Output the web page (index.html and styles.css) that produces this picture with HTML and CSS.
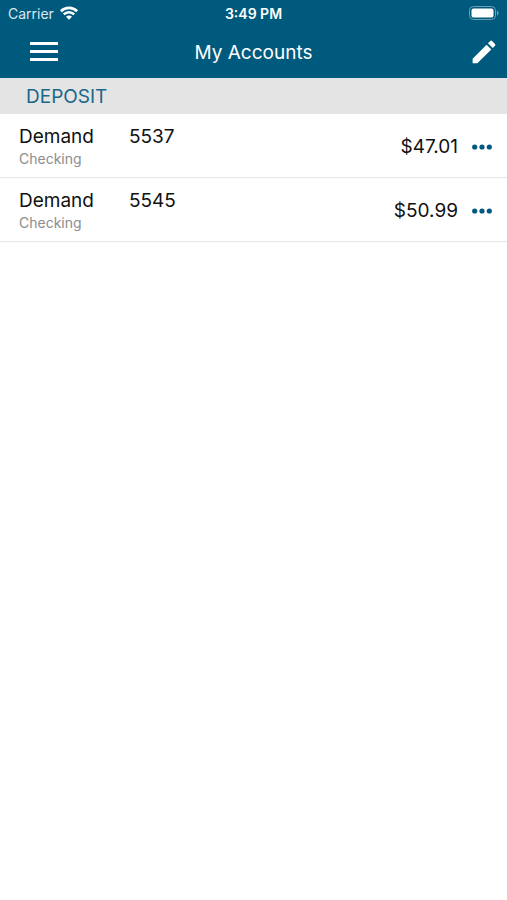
FILE: index.html
```html
<!DOCTYPE html>
<html lang="en">
<head>
    <meta charset="UTF-8">
    <meta name="viewport" content="width=device-width, initial-scale=1.0">
    <title>My Accounts</title>
    <link rel="stylesheet" href="styles.css">
</head>
<body>
    <header>
        <div class="status">
            <div class="carrier">
                <span>Carrier</span>
                <svg width="18" height="14" viewBox="0 0 18 14" fill="none" stroke="#fff" stroke-width="2.6">
                    <path d="M0.9 5.2a11.6 11.6 0 0 1 16.2 0"/>
                    <path d="M3.8 8.4a7.4 7.4 0 0 1 10.4 0"/>
                    <path d="M9 13.8L6 10.8a4.2 4.2 0 0 1 6 0z" fill="#fff" stroke="none"/>
                </svg>
            </div>
            <span class="time">3:49 PM</span>
            <svg class="battery" width="30" height="14" viewBox="0 0 30 14">
                <rect x="0.5" y="0.5" width="26" height="13" rx="4" fill="none" stroke="#6d9fb8"/>
                <rect x="2.5" y="2.5" width="22" height="9" rx="2" fill="#fff"/>
                <path d="M28 4.6a2.6 2.6 0 0 1 0 4.8z" fill="#6d9fb8"/>
            </svg>
        </div>
        <div class="navbar">
            <button class="menu" aria-label="Menu">
                <svg width="28" height="20" viewBox="0 0 28 20" fill="#fff">
                    <path d="M0 0h28v3H0zM0 8h28v3H0zM0 16h28v3H0z"/>
                </svg>
            </button>
            <h1>My Accounts</h1>
            <button class="edit" aria-label="Edit">
                <svg width="24" height="24" viewBox="2.5 2.5 19 19" fill="#fff">
                    <path d="M3 17.25V21h3.75L17.81 9.94l-3.75-3.75L3 17.25zM20.71 7.04a1 1 0 0 0 0-1.41l-2.34-2.34a1 1 0 0 0-1.41 0l-1.83 1.83 3.75 3.75 1.83-1.83z"/>
                </svg>
            </button>
        </div>
    </header>

    <main>
        <h2>DEPOSIT</h2>
        <ul class="accounts">
            <li>
                <div class="name">Demand<small>Checking</small></div>
                <div class="number">5537</div>
                <div class="amount">$47.01</div>
                <button class="more" aria-label="More options">
                    <svg width="20" height="6" viewBox="0 0 20 6" fill="#005a7e">
                        <circle cx="2.7" cy="3" r="2.6"/><circle cx="10" cy="3" r="2.6"/><circle cx="17.3" cy="3" r="2.6"/>
                    </svg>
                </button>
            </li>
            <li>
                <div class="name">Demand<small>Checking</small></div>
                <div class="number">5545</div>
                <div class="amount">$50.99</div>
                <button class="more" aria-label="More options">
                    <svg width="20" height="6" viewBox="0 0 20 6" fill="#005a7e">
                        <circle cx="2.7" cy="3" r="2.6"/><circle cx="10" cy="3" r="2.6"/><circle cx="17.3" cy="3" r="2.6"/>
                    </svg>
                </button>
            </li>
        </ul>
    </main>
</body>
</html>
```
FILE: styles.css
```css
* {
    box-sizing: border-box;
}
body {
    margin: 0;
    font-family: 'Inter', sans-serif;
    font-size: 19px;
    color: #111;
    background-color: #fff;
}
svg {
    display: block;
}
button {
    padding: 0;
    border: none;
    background: none;
    cursor: pointer;
}
header {
    color: #fff;
    background-color: #005a7e;
}
.status, .navbar {
    display: grid;
    grid-template-columns: 1fr auto 1fr;
    align-items: center;
}
.status {
    height: 26px;
    padding: 0 8px;
    font-size: 14px;
}
.carrier {
    display: flex;
    align-items: center;
    gap: 6px;
    color: #d9e8ef;
}
.time {
    font-weight: 600;
}
.battery {
    justify-self: end;
}
.navbar {
    height: 52px;
    padding: 0 11px;
}
.menu {
    justify-self: start;
    margin-left: 19px;
}
.edit {
    justify-self: end;
}
h1, h2 {
    margin: 0;
    font-size: 19px;
    font-weight: 400;
}
h2 {
    padding: 1px 26px 0;
    line-height: 35px;
    color: #1a678a;
    background-color: #e4e4e4;
}
.accounts {
    margin: 0;
    padding: 0;
    list-style: none;
}
.accounts li {
    display: flex;
    padding: 10px 15px 8px 19px;
    border-bottom: 1px solid #e6e6e6;
}
.name {
    width: 110px;
    line-height: 25px;
}
.name small {
    display: block;
    font-size: 14px;
    line-height: 20px;
    color: #8c8c8c;
}
.number {
    line-height: 25px;
}
.amount {
    margin-left: auto;
    align-self: center;
}
.more {
    margin-left: 14px;
}
```
